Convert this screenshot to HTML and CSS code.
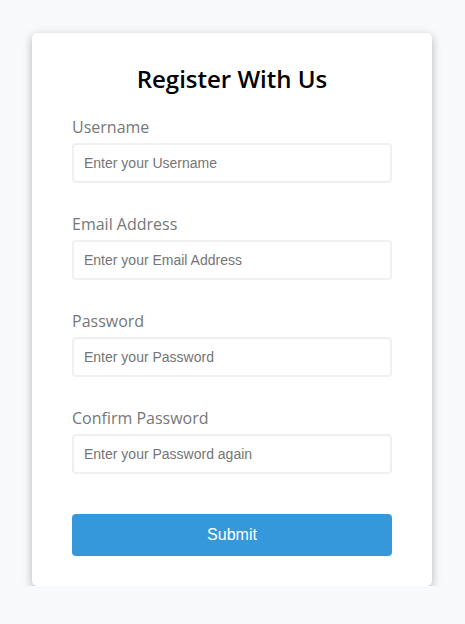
FILE: index.html
```html
<!DOCTYPE html>
<html lang="en">
<head>
<meta charset="utf-8">
<title>Register With Us</title>
<link rel="stylesheet" href="styles.css">
</head>
<body>
<div class="page">
  <form class="card">
    <h2 class="title">Register With Us</h2>
    <div class="group">
      <label class="label" for="username">Username</label>
      <input class="input" id="username" type="text" placeholder="Enter your Username">
    </div>
    <div class="group">
      <label class="label" for="email">Email Address</label>
      <input class="input" id="email" type="text" placeholder="Enter your Email Address">
    </div>
    <div class="group">
      <label class="label" for="password">Password</label>
      <input class="input" id="password" type="password" placeholder="Enter your Password">
    </div>
    <div class="group">
      <label class="label" for="password2">Confirm Password</label>
      <input class="input" id="password2" type="password" placeholder="Enter your Password again">
    </div>
    <button class="submit" type="submit">Submit</button>
  </form>
</div>
</body>
</html>
```
FILE: styles.css
```css
* { box-sizing: border-box; }
html, body { margin: 0; }
body {
  background: #f8f9fa;
  font-family: "Open Sans", sans-serif;
}
.page {
  display: flex;
  padding: 33px 0 0 32px;
}
.card {
  width: 400px;
  background: #fff;
  border-radius: 5px;
  box-shadow: 0 3px 10px rgba(0, 0, 0, 0.28);
  padding: 29px 40px 30px;
  display: flex;
  flex-direction: column;
}
.title {
  margin: 0 0 21px;
  text-align: center;
  font-size: 24px;
  font-weight: 600;
  color: #000;
  line-height: normal;
}
.group {
  display: flex;
  flex-direction: column;
  margin-bottom: 30px;
}
.label {
  color: #777;
  font-size: 16px;
  margin-bottom: 5px;
}
.input {
  height: 40px;
  border: 2px solid #f0f0f0;
  border-radius: 4px;
  padding: 0 10px;
  font-family: "Liberation Sans", Arial, sans-serif;
  font-size: 14px;
  color: #333;
  outline: none;
}
.input::placeholder { color: #757575; }
.submit {
  margin-top: 10px;
  height: 42px;
  border: none;
  border-radius: 4px;
  background: #3498db;
  color: #fff;
  font-family: "Liberation Sans", Arial, sans-serif;
  font-size: 16px;
}
```
